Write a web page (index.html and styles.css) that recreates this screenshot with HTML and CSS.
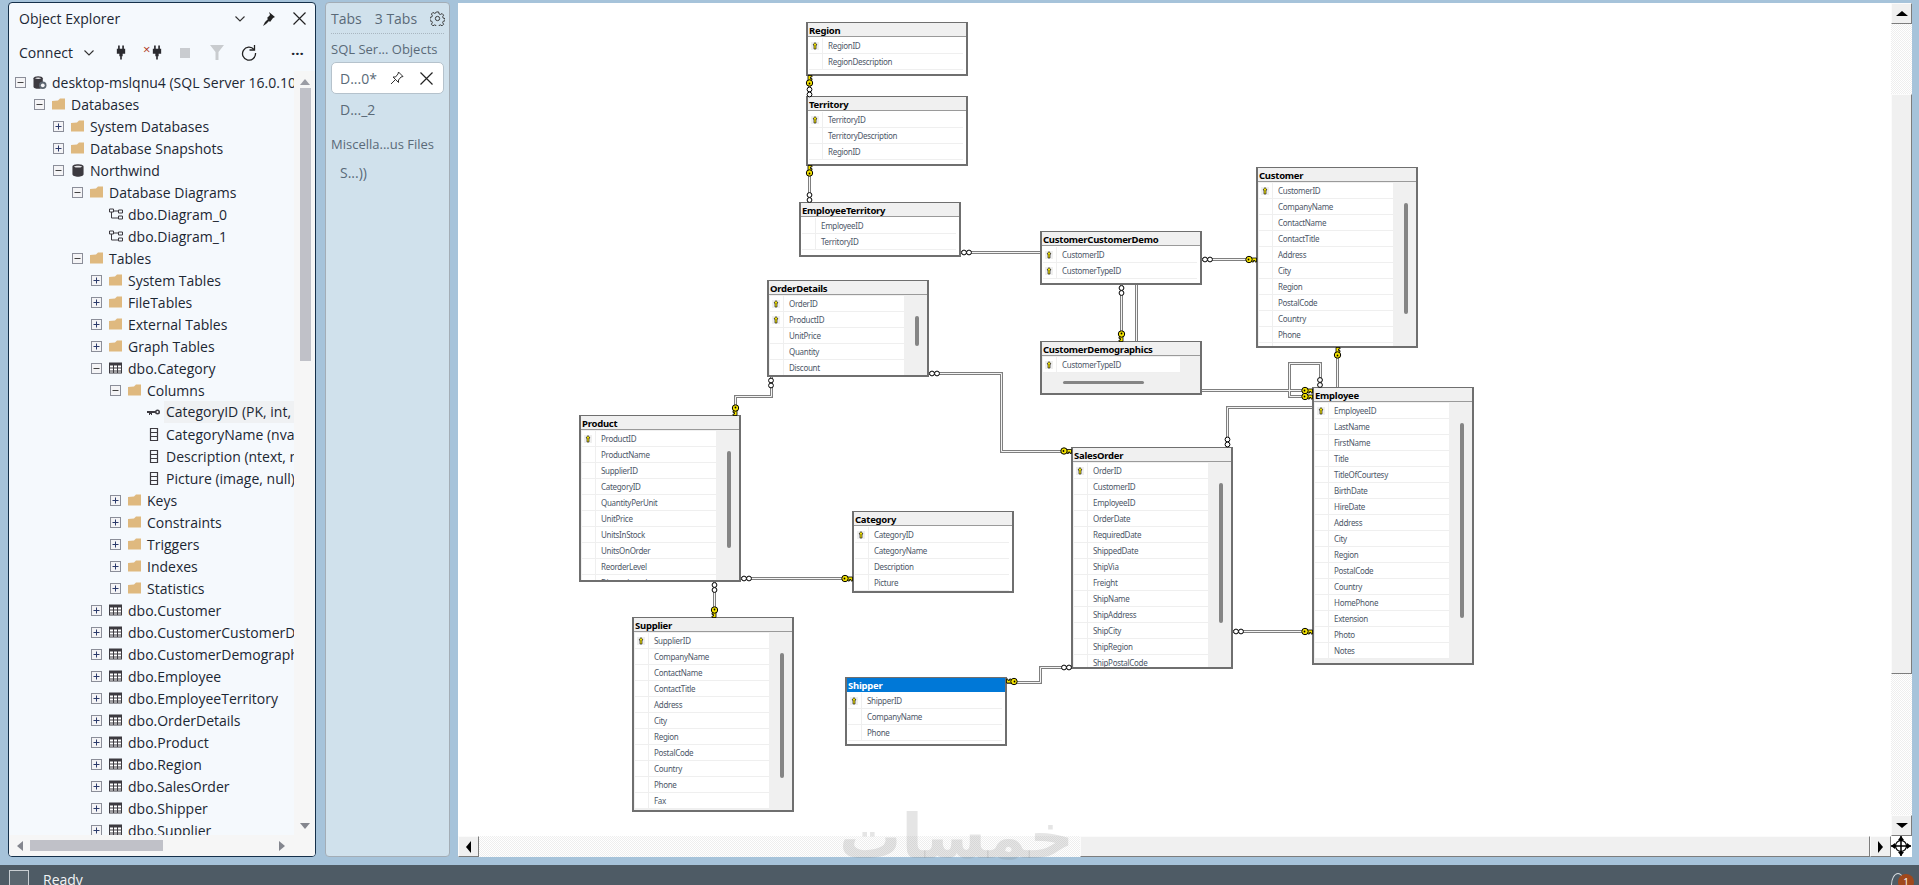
FILE: index.html
```html
<!DOCTYPE html>
<html lang="en">
<head>
    <meta charset="UTF-8">
    <title>Northwind diagram</title>
    <link rel="stylesheet" href="styles.css">
</head>
<body>
<!-- icons -->
<svg class="defs" width="0" height="0">
    <defs>
        <symbol id="i-plus" viewBox="0 0 11 11"><rect x=".5" y=".5" width="10" height="10" fill="#f4f4f6" stroke="#8b8e99"/><path d="M2.5 5.5h6M5.5 2.5v6" stroke="#2b3a6b" fill="none"/></symbol>
        <symbol id="i-minus" viewBox="0 0 11 11"><rect x=".5" y=".5" width="10" height="10" fill="#f4f4f6" stroke="#8b8e99"/><path d="M2.5 5.5h6" stroke="#444" fill="none"/></symbol>
        <symbol id="i-folder" viewBox="0 0 14 12"><path d="M0 2.5 6 2 8 0h5v11H0z" fill="#dfb97f"/></symbol>
        <symbol id="i-table" viewBox="0 0 14 12"><path d="M0 0h13v11H0z" fill="#3c3a40"/><path d="M1 3h3v2H1zM5 3h3v2H5zM9 3h3v2H9zM1 6h3v2H1zM5 6h3v2H5zM9 6h3v2H9zM1 9h3v1H1zM5 9h3v1H5zM9 9h3v1H9z" fill="#fff"/></symbol>
        <symbol id="i-db" viewBox="0 0 14 14"><path d="M1 3c0-3.500 12-3.500 12 0v8c0 3.500-12 3.500-12 0z" fill="#3c3a40"/><path d="M2.500 3c2-1.500 7-1.500 9 0-2 1.200-7 1.200-9 0" fill="#e8e8ea"/></symbol>
        <symbol id="i-server" viewBox="0 0 14 14"><path d="M0 2.500c0-3 10-3 10 0v9c0 3-10 3-10 0z" fill="#3c3a40"/><path d="M1.500 2.500c1.800-1.200 5.200-1.200 7 0-1.800 1-5.200 1-7 0" fill="#e8e8ea"/><circle cx="10" cy="10" r="4" fill="#5c6670"/><circle cx="10" cy="10" r="2" fill="#f4f4f6"/></symbol>
        <symbol id="i-diagram" viewBox="0 0 14 12"><path d="M.5.500h4v3h-4zM9.500 1.500h4v3h-4zM9.500 7.500h4v3h-4zM2.500 3.500v6h7M4.500 2.500h5" fill="none" stroke="#3c3a40"/></symbol>
        <symbol id="i-pkcol" viewBox="0 0 14 8"><circle cx="10.500" cy="3.500" r="2.500" fill="#3c3a40"/><path d="M0 2.500h9v2H5v2H4v-1H3v1H2v-2H0z" fill="#3c3a40"/><circle cx="10.500" cy="3.500" r="1" fill="#f5f9fd"/></symbol>
        <symbol id="i-col" viewBox="0 0 9 13"><path d="M1 .500h7v12H1zM1 4.500h7M1 8.500h7" fill="none" stroke="#3c3a40" stroke-width="1.200"/></symbol>
        <symbol id="i-plug" viewBox="0 0 12 17"><path d="M2.500 0h2v4h3V0h2v4H11v6H8v3H7v4H5v-4H4v-3H1V4h1.500z" fill="#2b2b30"/></symbol>
        <symbol id="i-chev" viewBox="0 0 10 6"><path d="M.5.500 5 5 9.500.500" fill="none" stroke="#333" stroke-width="1.100"/></symbol>
        <symbol id="i-close" viewBox="0 0 13 13"><path d="M.5.500l12 12M12.500.500l-12 12" fill="none" stroke="#222" stroke-width="1.200"/></symbol>
        <symbol id="i-pkmini" viewBox="-1 0 8 8"><path d="M3 .5 5 3H4v4H2V3H1z" fill="#f5e400" stroke="#222" stroke-width=".7"/></symbol>
    </defs>
</svg>

<div class="main">
    <!-- Object Explorer -->
    <section class="explorer">
        <div class="exp-head">
            <span class="exp-title">Object Explorer</span>
            <svg class="ic-chev"><use href="#i-chev"/></svg>
            <svg class="ic-pin" viewBox="0 0 14 14"><path d="M8 0l6 5-2 1-3 4-1-1-3 3-3 2 2-4 3-3-1-1 3-3z" fill="#222"/></svg>
            <svg class="ic-close"><use href="#i-close"/></svg>
        </div>
        <div class="exp-tools">
            <span class="connect">Connect</span>
            <svg class="ic-chev"><use href="#i-chev"/></svg>
            <svg class="ic-plug"><use href="#i-plug"/></svg>
            <span class="plug-x"><b>×</b><svg class="ic-plug"><use href="#i-plug"/></svg></span>
            <span class="ic-stop"></span>
            <svg class="ic-filter" viewBox="0 0 14 15"><path d="M0 0h14L8.500 7v8h-3V7z" fill="#c9cccf"/></svg>
            <svg class="ic-refresh" viewBox="0 0 16 16"><path d="M13 4.500A6.500 6.500 0 1 0 14.500 8" fill="none" stroke="#222" stroke-width="1.300"/><path d="M13.500 0v5h-5" fill="none" stroke="#222" stroke-width="1.300"/></svg>
            <span class="more">···</span>
        </div>
        <div class="tree-wrap">
            <ul class="tree">
                <li class="d0"><svg class="ex"><use href="#i-minus"/></svg><svg class="ic"><use href="#i-server"/></svg>desktop-mslqnu4 (SQL Server 16.0.1000 - DESKTOP-MSLQNU4\user)</li>
                <li class="d1"><svg class="ex"><use href="#i-minus"/></svg><svg class="ic"><use href="#i-folder"/></svg>Databases</li>
                <li class="d2"><svg class="ex"><use href="#i-plus"/></svg><svg class="ic"><use href="#i-folder"/></svg>System Databases</li>
                <li class="d2"><svg class="ex"><use href="#i-plus"/></svg><svg class="ic"><use href="#i-folder"/></svg>Database Snapshots</li>
                <li class="d2"><svg class="ex"><use href="#i-minus"/></svg><svg class="ic"><use href="#i-db"/></svg>Northwind</li>
                <li class="d3"><svg class="ex"><use href="#i-minus"/></svg><svg class="ic"><use href="#i-folder"/></svg>Database Diagrams</li>
                <li class="d4"><span class="ex"></span><svg class="ic"><use href="#i-diagram"/></svg>dbo.Diagram_0</li>
                <li class="d4"><span class="ex"></span><svg class="ic"><use href="#i-diagram"/></svg>dbo.Diagram_1</li>
                <li class="d3"><svg class="ex"><use href="#i-minus"/></svg><svg class="ic"><use href="#i-folder"/></svg>Tables</li>
                <li class="d4"><svg class="ex"><use href="#i-plus"/></svg><svg class="ic"><use href="#i-folder"/></svg>System Tables</li>
                <li class="d4"><svg class="ex"><use href="#i-plus"/></svg><svg class="ic"><use href="#i-folder"/></svg>FileTables</li>
                <li class="d4"><svg class="ex"><use href="#i-plus"/></svg><svg class="ic"><use href="#i-folder"/></svg>External Tables</li>
                <li class="d4"><svg class="ex"><use href="#i-plus"/></svg><svg class="ic"><use href="#i-folder"/></svg>Graph Tables</li>
                <li class="d4"><svg class="ex"><use href="#i-minus"/></svg><svg class="ic"><use href="#i-table"/></svg>dbo.Category</li>
                <li class="d5"><svg class="ex"><use href="#i-minus"/></svg><svg class="ic"><use href="#i-folder"/></svg>Columns</li>
                <li class="d6"><span class="ex"></span><svg class="ic"><use href="#i-pkcol"/></svg><span class="sel-node">CategoryID (PK, int, not null)</span></li>
                <li class="d6"><span class="ex"></span><svg class="ic"><use href="#i-col"/></svg>CategoryName (nvarchar(15), not null)</li>
                <li class="d6"><span class="ex"></span><svg class="ic"><use href="#i-col"/></svg>Description (ntext, null)</li>
                <li class="d6"><span class="ex"></span><svg class="ic"><use href="#i-col"/></svg>Picture (image, null)</li>
                <li class="d5"><svg class="ex"><use href="#i-plus"/></svg><svg class="ic"><use href="#i-folder"/></svg>Keys</li>
                <li class="d5"><svg class="ex"><use href="#i-plus"/></svg><svg class="ic"><use href="#i-folder"/></svg>Constraints</li>
                <li class="d5"><svg class="ex"><use href="#i-plus"/></svg><svg class="ic"><use href="#i-folder"/></svg>Triggers</li>
                <li class="d5"><svg class="ex"><use href="#i-plus"/></svg><svg class="ic"><use href="#i-folder"/></svg>Indexes</li>
                <li class="d5"><svg class="ex"><use href="#i-plus"/></svg><svg class="ic"><use href="#i-folder"/></svg>Statistics</li>
                <li class="d4"><svg class="ex"><use href="#i-plus"/></svg><svg class="ic"><use href="#i-table"/></svg>dbo.Customer</li>
                <li class="d4"><svg class="ex"><use href="#i-plus"/></svg><svg class="ic"><use href="#i-table"/></svg>dbo.CustomerCustomerDemo</li>
                <li class="d4"><svg class="ex"><use href="#i-plus"/></svg><svg class="ic"><use href="#i-table"/></svg>dbo.CustomerDemographics</li>
                <li class="d4"><svg class="ex"><use href="#i-plus"/></svg><svg class="ic"><use href="#i-table"/></svg>dbo.Employee</li>
                <li class="d4"><svg class="ex"><use href="#i-plus"/></svg><svg class="ic"><use href="#i-table"/></svg>dbo.EmployeeTerritory</li>
                <li class="d4"><svg class="ex"><use href="#i-plus"/></svg><svg class="ic"><use href="#i-table"/></svg>dbo.OrderDetails</li>
                <li class="d4"><svg class="ex"><use href="#i-plus"/></svg><svg class="ic"><use href="#i-table"/></svg>dbo.Product</li>
                <li class="d4"><svg class="ex"><use href="#i-plus"/></svg><svg class="ic"><use href="#i-table"/></svg>dbo.Region</li>
                <li class="d4"><svg class="ex"><use href="#i-plus"/></svg><svg class="ic"><use href="#i-table"/></svg>dbo.SalesOrder</li>
                <li class="d4"><svg class="ex"><use href="#i-plus"/></svg><svg class="ic"><use href="#i-table"/></svg>dbo.Shipper</li>
                <li class="d4"><svg class="ex"><use href="#i-plus"/></svg><svg class="ic"><use href="#i-table"/></svg>dbo.Supplier</li>
            </ul>
            <div class="tree-v">
                <span class="tri-up"></span>
                <span class="tree-v-thumb"></span>
                <span class="tri-down"></span>
            </div>
        </div>
        <div class="tree-h">
            <span class="tri-left"></span>
            <span class="tree-h-track"><span class="tree-h-thumb"></span></span>
            <span class="tri-right"></span>
            <span class="tree-corner"></span>
        </div>
    </section>

    <!-- Tabs -->
    <section class="tabs">
        <div class="tabs-head">
            <span>Tabs</span><span>3 Tabs</span>
            <svg class="ic-gear" viewBox="0 0 16 16"><circle cx="8" cy="8" r="2.300" fill="none" stroke="#333"/><path d="M6.800 1h2.400l.4 2 1.500.7 1.800-1 1.600 1.700-1 1.700.6 1.500 2 .5v2.300l-2 .5-.6 1.500 1 1.700-1.600 1.700-1.800-1-1.500.7-.4 2H6.800l-.4-2-1.500-.7-1.800 1-1.600-1.700 1-1.700-.6-1.500-2-.5V6.900l2-.5.6-1.500-1-1.700 1.600-1.700 1.800 1 1.500-.7z" fill="none" stroke="#333"/></svg>
        </div>
        <div class="tabs-group">SQL Ser... Objects</div>
        <div class="tab-card">
            <span>D...0*</span>
            <svg class="ic-tabpin" viewBox="0 0 14 14"><path d="M8.500 1l4.500 4.500-2 .5-2.500 3v2.500L3 6h2.500l2.500-3zM5 9l-4 4" fill="none" stroke="#333"/></svg>
            <svg class="ic-tabclose"><use href="#i-close"/></svg>
        </div>
        <div class="tab-item">D..._2</div>
        <div class="tabs-group misc">Miscella...us Files</div>
        <div class="tab-item">S...))</div>
    </section>

    <!-- Diagram -->
    <section class="diagram">
        <div class="canvas">
            <div class="tbl t-region">
                <div class="tbl-title">Region</div>
                <ul class="cols">
                    <li class="pk"><span class="sel"><svg><use href="#i-pkmini"/></svg></span>RegionID</li>
                    <li><span class="sel"></span>RegionDescription</li>
                </ul>
            </div>
            <div class="tbl t-territory">
                <div class="tbl-title">Territory</div>
                <ul class="cols">
                    <li class="pk"><span class="sel"><svg><use href="#i-pkmini"/></svg></span>TerritoryID</li>
                    <li><span class="sel"></span>TerritoryDescription</li>
                    <li><span class="sel"></span>RegionID</li>
                </ul>
            </div>
            <div class="tbl t-empterr">
                <div class="tbl-title">EmployeeTerritory</div>
                <ul class="cols">
                    <li><span class="sel"></span>EmployeeID</li>
                    <li><span class="sel"></span>TerritoryID</li>
                </ul>
            </div>
            <div class="tbl t-ccd">
                <div class="tbl-title">CustomerCustomerDemo</div>
                <ul class="cols">
                    <li class="pk"><span class="sel"><svg><use href="#i-pkmini"/></svg></span>CustomerID</li>
                    <li class="pk"><span class="sel"><svg><use href="#i-pkmini"/></svg></span>CustomerTypeID</li>
                </ul>
            </div>
            <div class="tbl t-demog">
                <div class="tbl-title">CustomerDemographics</div>
                <ul class="cols cols-demog">
                    <li class="pk"><span class="sel"><svg><use href="#i-pkmini"/></svg></span>CustomerTypeID</li>
                </ul>
                <span class="thumb-h"></span>
            </div>
            <div class="tbl scroll t-customer">
                <div class="tbl-title">Customer</div>
                <ul class="cols">
                    <li class="pk"><span class="sel"><svg><use href="#i-pkmini"/></svg></span>CustomerID</li>
                    <li><span class="sel"></span>CompanyName</li>
                    <li><span class="sel"></span>ContactName</li>
                    <li><span class="sel"></span>ContactTitle</li>
                    <li><span class="sel"></span>Address</li>
                    <li><span class="sel"></span>City</li>
                    <li><span class="sel"></span>Region</li>
                    <li><span class="sel"></span>PostalCode</li>
                    <li><span class="sel"></span>Country</li>
                    <li><span class="sel"></span>Phone</li>
                    <li><span class="sel"></span></li>
                </ul>
                <span class="thumb-v"></span>
            </div>
            <div class="tbl scroll t-orderdet">
                <div class="tbl-title">OrderDetails</div>
                <ul class="cols">
                    <li class="pk"><span class="sel"><svg><use href="#i-pkmini"/></svg></span>OrderID</li>
                    <li class="pk"><span class="sel"><svg><use href="#i-pkmini"/></svg></span>ProductID</li>
                    <li><span class="sel"></span>UnitPrice</li>
                    <li><span class="sel"></span>Quantity</li>
                    <li><span class="sel"></span>Discount</li>
                </ul>
                <span class="thumb-v"></span>
            </div>
            <div class="tbl scroll t-product">
                <div class="tbl-title">Product</div>
                <ul class="cols">
                    <li class="pk"><span class="sel"><svg><use href="#i-pkmini"/></svg></span>ProductID</li>
                    <li><span class="sel"></span>ProductName</li>
                    <li><span class="sel"></span>SupplierID</li>
                    <li><span class="sel"></span>CategoryID</li>
                    <li><span class="sel"></span>QuantityPerUnit</li>
                    <li><span class="sel"></span>UnitPrice</li>
                    <li><span class="sel"></span>UnitsInStock</li>
                    <li><span class="sel"></span>UnitsOnOrder</li>
                    <li><span class="sel"></span>ReorderLevel</li>
                    <li><span class="sel"></span>Discontinued</li>
                </ul>
                <span class="thumb-v"></span>
            </div>
            <div class="tbl t-category">
                <div class="tbl-title">Category</div>
                <ul class="cols">
                    <li class="pk"><span class="sel"><svg><use href="#i-pkmini"/></svg></span>CategoryID</li>
                    <li><span class="sel"></span>CategoryName</li>
                    <li><span class="sel"></span>Description</li>
                    <li><span class="sel"></span>Picture</li>
                </ul>
            </div>
            <div class="tbl scroll t-supplier">
                <div class="tbl-title">Supplier</div>
                <ul class="cols">
                    <li class="pk"><span class="sel"><svg><use href="#i-pkmini"/></svg></span>SupplierID</li>
                    <li><span class="sel"></span>CompanyName</li>
                    <li><span class="sel"></span>ContactName</li>
                    <li><span class="sel"></span>ContactTitle</li>
                    <li><span class="sel"></span>Address</li>
                    <li><span class="sel"></span>City</li>
                    <li><span class="sel"></span>Region</li>
                    <li><span class="sel"></span>PostalCode</li>
                    <li><span class="sel"></span>Country</li>
                    <li><span class="sel"></span>Phone</li>
                    <li><span class="sel"></span>Fax</li>
                </ul>
                <span class="thumb-v"></span>
            </div>
            <div class="tbl selected t-shipper">
                <div class="tbl-title">Shipper</div>
                <ul class="cols">
                    <li class="pk"><span class="sel"><svg><use href="#i-pkmini"/></svg></span>ShipperID</li>
                    <li><span class="sel"></span>CompanyName</li>
                    <li><span class="sel"></span>Phone</li>
                </ul>
            </div>
            <div class="tbl scroll t-salesorder">
                <div class="tbl-title">SalesOrder</div>
                <ul class="cols">
                    <li class="pk"><span class="sel"><svg><use href="#i-pkmini"/></svg></span>OrderID</li>
                    <li><span class="sel"></span>CustomerID</li>
                    <li><span class="sel"></span>EmployeeID</li>
                    <li><span class="sel"></span>OrderDate</li>
                    <li><span class="sel"></span>RequiredDate</li>
                    <li><span class="sel"></span>ShippedDate</li>
                    <li><span class="sel"></span>ShipVia</li>
                    <li><span class="sel"></span>Freight</li>
                    <li><span class="sel"></span>ShipName</li>
                    <li><span class="sel"></span>ShipAddress</li>
                    <li><span class="sel"></span>ShipCity</li>
                    <li><span class="sel"></span>ShipRegion</li>
                    <li><span class="sel"></span>ShipPostalCode</li>
                </ul>
                <span class="thumb-v"></span>
            </div>
            <div class="tbl scroll t-employee">
                <div class="tbl-title">Employee</div>
                <ul class="cols">
                    <li class="pk"><span class="sel"><svg><use href="#i-pkmini"/></svg></span>EmployeeID</li>
                    <li><span class="sel"></span>LastName</li>
                    <li><span class="sel"></span>FirstName</li>
                    <li><span class="sel"></span>Title</li>
                    <li><span class="sel"></span>TitleOfCourtesy</li>
                    <li><span class="sel"></span>BirthDate</li>
                    <li><span class="sel"></span>HireDate</li>
                    <li><span class="sel"></span>Address</li>
                    <li><span class="sel"></span>City</li>
                    <li><span class="sel"></span>Region</li>
                    <li><span class="sel"></span>PostalCode</li>
                    <li><span class="sel"></span>Country</li>
                    <li><span class="sel"></span>HomePhone</li>
                    <li><span class="sel"></span>Extension</li>
                    <li><span class="sel"></span>Photo</li>
                    <li><span class="sel"></span>Notes</li>
                </ul>
                <span class="thumb-v"></span>
            </div>

            <!-- relationship lines, viewBox uses window coordinates -->
            <svg class="rels" viewBox="458 3 1433 833">
                <defs>
                    <path id="rel-lines" d="M809.500 76V96M809.500 166V202M961 252.500H1040M1202 259.500H1256M1121.500 285V341M1136.500 285V341M1202 390.500H1312M1312 396.500H1289.500V363.500H1320.500V387M1337.500 348V387M1227.500 447V407.500H1312M929 373.500H1001.500V451.500H1071M771.500 377V396.500H735.500V415M741 578.500H852M714.500 582V617M1007 682.500H1040.500V667.500H1071M1233 631.500H1312"/>
                    <g id="key"><path d="M1 -1.500H7.500V2.500H6V1H4.500V2.500H3V1H1z" fill="#f5e400" stroke="#000" stroke-width=".8"/><circle cx="0" cy="0" r="3.200" fill="#f5e400" stroke="#000"/><circle cx="-.5" cy="0" r=".9" fill="#000"/></g>
                    <g id="inf"><circle cx="-2.500" cy="0" r="2.400" fill="#fff" stroke="#000"/><circle cx="2.500" cy="0" r="2.400" fill="#fff" stroke="#000"/></g>
                </defs>
                <use href="#rel-lines" class="rel-o"/>
                <use href="#rel-lines" class="rel-i"/>
                <use href="#key" transform="translate(809.500 83) rotate(-90)"/>
                <use href="#inf" transform="translate(809.500 92) rotate(90)"/>
                <use href="#key" transform="translate(809.500 173) rotate(-90)"/>
                <use href="#inf" transform="translate(809.500 197.500) rotate(90)"/>
                <use href="#inf" transform="translate(966.500 252.500)"/>
                <use href="#inf" transform="translate(1207.500 259.500)"/>
                <use href="#key" transform="translate(1249 259.500)"/>
                <use href="#inf" transform="translate(1121.500 290.500) rotate(90)"/>
                <use href="#key" transform="translate(1121.500 334) rotate(90)"/>
                <use href="#key" transform="translate(1305 390.500)"/>
                <use href="#key" transform="translate(1305 396.500)"/>
                <use href="#inf" transform="translate(1320 382.500) rotate(90)"/>
                <use href="#key" transform="translate(1337.500 355) rotate(-90)"/>
                <use href="#inf" transform="translate(1227.500 442) rotate(90)"/>
                <use href="#inf" transform="translate(934.500 373.500)"/>
                <use href="#key" transform="translate(1064 451)"/>
                <use href="#inf" transform="translate(771 383) rotate(90)"/>
                <use href="#key" transform="translate(735.500 408) rotate(90)"/>
                <use href="#inf" transform="translate(746.500 578.500)"/>
                <use href="#key" transform="translate(845 578.500)"/>
                <use href="#inf" transform="translate(714.500 587.500) rotate(90)"/>
                <use href="#key" transform="translate(714.500 610) rotate(90)"/>
                <use href="#key" transform="translate(1014 681.500) rotate(180)"/>
                <use href="#inf" transform="translate(1066.500 667.500)"/>
                <use href="#inf" transform="translate(1238.500 631.500)"/>
                <use href="#key" transform="translate(1305 631.500)"/>
            </svg>
        </div>
        <div class="vbar">
            <span class="sb-btn"><i class="arr-up"></i></span>
            <span class="track"></span>
            <span class="sb-thumb-v"></span>
            <span class="track"></span>
            <span class="sb-btn"><i class="arr-down"></i></span>
        </div>
        <div class="hbar">
            <span class="sb-btn"><i class="arr-left"></i></span>
            <span class="track"></span>
            <span class="sb-thumb-h"></span>
            <span class="sb-btn"><i class="arr-right"></i></span>
        </div>
        <div class="corner">
            <svg viewBox="0 0 20 20" width="20" height="20"><circle cx="10" cy="10" r="5.500" fill="none" stroke="#000" stroke-width="1.300"/><path d="M10 0v20M0 10h20" stroke="#000" stroke-width="1.500"/><path d="M10 0l3 4H7zM10 20l3-4H7zM0 10l4-3v6zM20 10l-4-3v6z"/></svg>
        </div>
    </section>
</div>

<footer class="status">
    <span class="status-box"></span>
    <span class="status-text">Ready</span>
    <span class="bell"><i>1</i></span>
</footer>

<span class="watermark" dir="rtl" lang="ar">خمسات</span>
</body>
</html>
```

FILE: styles.css
```css
*{
    margin: 0;
    padding: 0;
    box-sizing: border-box;
}
html,body{
    width: 100%;
    height: 885px;
    overflow: hidden;
}
body{
    display: flex;
    flex-direction: column;
    background-color: #a6c3da;
    font-family: "Open Sans", "Noto Sans", sans-serif;
    font-size: 14px;
    color: #1c2733;
    position: relative;
}
ul{
    list-style: none;
}
.defs{
    position: absolute;
}
.main{
    flex: 1;
    display: flex;
    padding: 2px 7px 8px 8px;
    min-height: 0;
}

/* object explorer */
.explorer{
    width: 308px;
    display: flex;
    flex-direction: column;
    background-color: #f5f9fd;
    border: 1px solid #15304a;
    border-radius: 4px;
    overflow: hidden;
}
.exp-head{
    height: 31px;
    display: flex;
    align-items: center;
    padding-left: 10px;
    flex: none;
}
.exp-title{
    width: 216px;
    font-size: 14px;
}
.ic-chev{
    width: 10px;
    height: 6px;
}
.ic-pin{
    width: 14px;
    height: 14px;
    margin-left: 16px;
}
.ic-close{
    width: 13px;
    height: 13px;
    margin-left: 18px;
}
.exp-tools{
    height: 37px;
    display: flex;
    align-items: center;
    padding-left: 10px;
    flex: none;
}
.connect{
    width: 65px;
}
.ic-plug{
    width: 10px;
    height: 17px;
}
.exp-tools > .ic-plug{
    margin-left: 22px;
}
.plug-x{
    display: flex;
    align-items: flex-start;
    margin-left: 17px;
    height: 17px;
}
.plug-x b{
    color: #b03a22;
    font-size: 13px;
    line-height: 10px;
    font-weight: 400;
    width: 9px;
}
.ic-stop{
    width: 10px;
    height: 10px;
    margin-left: 18px;
    background-color: #c9ccd0;
}
.ic-filter{
    width: 14px;
    height: 15px;
    margin-left: 20px;
}
.ic-refresh{
    width: 16px;
    height: 16px;
    margin-left: 17px;
}
.more{
    margin-left: 34px;
    font-weight: 700;
    font-size: 15px;
    letter-spacing: 0;
}
.tree-wrap{
    flex: 1;
    min-height: 0;
    display: flex;
}
.tree{
    width: 285px;
    overflow: hidden;
    flex: none;
}
.tree li{
    height: 22px;
    display: flex;
    align-items: center;
    white-space: nowrap;
    overflow: hidden;
    font-size: 14px;
}
.d0{ padding-left: 6px; }
.d1{ padding-left: 25px; }
.d2{ padding-left: 44px; }
.d3{ padding-left: 63px; }
.d4{ padding-left: 82px; }
.d5{ padding-left: 101px; }
.d6{ padding-left: 120px; }
.ex{
    width: 11px;
    height: 11px;
    margin-right: 7px;
    flex: none;
    display: block;
}
.ic{
    width: 14px;
    height: 13px;
    margin-right: 5px;
    flex: none;
}
.sel-node{
    background-color: #eff1f3;
    height: 22px;
    line-height: 22px;
    margin-left: -2px;
    padding-left: 2px;
    flex: 1;
    overflow: hidden;
}
.tree-v{
    width: 21px;
    display: flex;
    flex-direction: column;
    align-items: center;
    background-color: #f6f6f6;
    padding-top: 8px;
    padding-bottom: 6px;
}
.tri-up{
    border: 5px solid transparent;
    border-top: 0;
    border-bottom: 6px solid #9a9ca4;
    margin-left: 1px;
}
.tri-down{
    border: 5px solid transparent;
    border-bottom: 0;
    border-top: 6px solid #84868e;
    margin-top: auto;
    margin-left: 1px;
}
.tree-v-thumb{
    width: 11px;
    height: 273px;
    background-color: #c0c1c8;
    margin-top: 3px;
    margin-left: 1px;
}
.tree-h{
    height: 21px;
    flex: none;
    display: flex;
    align-items: center;
    background-color: #f6f6f6;
    padding-left: 8px;
}
.tri-left{
    border: 5px solid transparent;
    border-left: 0;
    border-right: 6px solid #84868e;
}
.tri-right{
    border: 5px solid transparent;
    border-right: 0;
    border-left: 6px solid #84868e;
}
.tree-h-track{
    width: 256px;
    padding-left: 7px;
}
.tree-h-thumb{
    display: block;
    width: 133px;
    height: 11px;
    background-color: #c0c1c8;
}

/* tabs panel */
.tabs{
    width: 125px;
    margin-left: 9px;
    background-color: #d0e1ec;
    border: 1px solid #a3adb6;
    border-radius: 4px;
    padding: 0 5px;
    color: #5a6a78;
}
.tabs-head{
    height: 31px;
    margin-bottom: 3px;
    display: flex;
    align-items: center;
    border-bottom: 1px dotted #a9b6c0;
    gap: 13px;
    font-size: 14px;
    white-space: nowrap;
}
.ic-gear{
    width: 15px;
    height: 15px;
    margin-left: auto;
    margin-right: 2px;
    flex: none;
}
.tabs-group{
    height: 25px;
    line-height: 25px;
    font-size: 13px;
}
.misc{
    margin-top: 6px;
}
.tab-card{
    height: 32px;
    background-color: #fff;
    border: 1px solid #b5c2cc;
    border-radius: 5px;
    display: flex;
    align-items: center;
    padding-left: 8px;
}
.tab-card span{
    width: 50px;
}
.ic-tabpin{
    width: 14px;
    height: 14px;
}
.ic-tabclose{
    width: 13px;
    height: 13px;
    margin-left: 16px;
}
.tab-item{
    height: 32px;
    line-height: 32px;
    padding-left: 9px;
}

/* diagram */
.diagram{
    width: 1454px;
    margin-left: 8px;
    display: grid;
    grid-template-columns: 1433px 21px;
    grid-template-rows: 833px 21px;
    border-right: 1px solid #9aa3aa;
    border-bottom: 1px solid #9aa3aa;
    margin-top: 1px;
}
.canvas{
    position: relative;
    background-color: #fff;
    overflow: hidden;
}
.rels{
    position: absolute;
    left: 0;
    top: 0;
    width: 1433px;
    height: 833px;
}
.rel-o{
    fill: none;
    stroke: #7f7f7f;
    stroke-width: 3;
}
.rel-i{
    fill: none;
    stroke: #f4f4f4;
    stroke-width: 1;
}
.vbar{
    display: flex;
    flex-direction: column;
}
.hbar{
    display: flex;
}
.track{
    flex: 1;
    background: repeating-conic-gradient(#eeeeee 0 25%, #ffffff 0 50%) 0 0 / 2px 2px;
}
.sb-btn{
    width: 21px;
    height: 21px;
    flex: none;
    background-color: #f0f0f0;
    border: 1px solid;
    border-color: #fbfbfb #7d7d7d #7d7d7d #fbfbfb;
    display: flex;
    align-items: center;
    justify-content: center;
}
.sb-thumb-v{
    height: 580px;
    background-color: #f0f0f0;
    border: 1px solid;
    border-color: #fbfbfb #7d7d7d #7d7d7d #fbfbfb;
}
.sb-thumb-h{
    width: 790px;
    background-color: #f0f0f0;
    border: 1px solid;
    border-color: #fbfbfb #7d7d7d #7d7d7d #fbfbfb;
}
.vbar .track:nth-child(2){
    flex: none;
    height: 70px;
}
.arr-up{
    border: 6px solid transparent;
    border-top: 0;
    border-bottom: 5px solid #000;
}
.arr-down{
    border: 6px solid transparent;
    border-bottom: 0;
    border-top: 5px solid #000;
}
.arr-left{
    border: 6px solid transparent;
    border-left: 0;
    border-right: 5px solid #000;
}
.arr-right{
    border: 6px solid transparent;
    border-right: 0;
    border-left: 5px solid #000;
}
.corner{
    background-color: #fff;
}

/* diagram tables */
.tbl{
    position: absolute;
    width: 162px;
    background-color: #fff;
    border: 2px solid #6f6f6f;
    border-top-width: 1px;
    overflow: hidden;
    font-family: "Noto Sans", sans-serif;
}
.tbl-title{
    height: 14px;
    line-height: 15px;
    padding-left: 1px;
    background-color: #f0f0f0;
    border-bottom: 1px solid #9a9a9a;
    font-size: 9.5px;
    letter-spacing: -0.25px;
    font-weight: 700;
    color: #000;
    white-space: nowrap;
    margin-bottom: 1px;
}
.selected .tbl-title{
    background-color: #0078d7;
    color: #fff;
    border-bottom-color: #0078d7;
}
.cols{
    margin: 0 3px 0 1px;
    background-color: #fff;
}
.cols li{
    height: 16px;
    line-height: 15px;
    display: flex;
    border-bottom: 1px solid #efefef;
    font-size: 8px;
    letter-spacing: -0.3px;
    color: #4d5768;
    white-space: nowrap;
}
.sel{
    width: 14px;
    height: 15px;
    margin-right: 5px;
    border-right: 1px solid #efefef;
    flex: none;
    display: flex;
    align-items: center;
    padding-left: 2px;
}
.pk .sel svg{
    width: 8px;
    height: 8px;
    background-color: #efefef;
}
.scroll{
    background-color: #f0f0f0;
}
.scroll .cols{
    margin-right: 23px;
}
.thumb-v{
    position: absolute;
    right: 8px;
    top: 35px;
    width: 4px;
    background-color: #858585;
    border-radius: 2px;
}
.t-region{ left: 348px; top: 19px; height: 54px; }
.t-territory{ left: 348px; top: 93px; height: 70px; }
.t-empterr{ left: 341px; top: 199px; height: 55px; }
.t-ccd{ left: 582px; top: 228px; height: 54px; }
.t-demog{ left: 582px; top: 338px; height: 54px; background-color: #f0f0f0; }
.t-customer{ left: 798px; top: 164px; height: 181px; }
.t-orderdet{ left: 309px; top: 277px; height: 97px; }
.t-product{ left: 121px; top: 412px; height: 167px; }
.t-category{ left: 394px; top: 508px; height: 82px; }
.t-supplier{ left: 174px; top: 614px; height: 195px; }
.t-shipper{ left: 387px; top: 674px; height: 69px; }
.t-salesorder{ left: 613px; top: 444px; height: 222px; }
.t-employee{ left: 854px; top: 384px; height: 278px; }
.t-customer .thumb-v{ height: 111px; }
.t-orderdet .thumb-v{ height: 30px; }
.t-product .thumb-v{ height: 97px; }
.t-supplier .thumb-v{ height: 125px; }
.t-salesorder .thumb-v{ height: 140px; }
.t-employee .thumb-v{ height: 195px; }
.cols-demog{
    width: 137px;
}
.thumb-h{
    position: absolute;
    left: 21px;
    top: 39px;
    width: 81px;
    height: 3px;
    background-color: #858585;
    border-radius: 2px;
}

/* status bar */
.status{
    height: 20px;
    flex: none;
    background-color: #4e5b65;
    display: flex;
    align-items: flex-start;
    padding-left: 9px;
    color: #f2f4f5;
    overflow: hidden;
}
.status-box{
    width: 20px;
    height: 20px;
    margin-top: 5px;
    border: 1px solid #c9ced2;
    background-color: #5a666f;
}
.status-text{
    margin-left: 14px;
    margin-top: 5px;
    font-size: 14px;
    line-height: 20px;
}
.bell{
    margin-left: auto;
    margin-right: 14px;
    margin-top: 8px;
    width: 14px;
    height: 24px;
    position: relative;
    border: 1px solid #d8dde0;
    border-radius: 50% 50% 0 0;
}
.bell i{
    position: absolute;
    left: 6px;
    top: 0;
    width: 16px;
    height: 16px;
    border-radius: 50%;
    background-color: #a0481c;
    color: #fff;
    font-size: 10px;
    font-style: normal;
    text-align: center;
    line-height: 16px;
}

.watermark{
    position: absolute;
    left: 844px;
    top: 797px;
    width: 230px;
    font-family: "DejaVu Sans", sans-serif;
    font-weight: 700;
    font-size: 62px;
    line-height: 80px;
    color: rgba(125, 125, 125, 0.2);
    white-space: nowrap;
    pointer-events: none;
}
```
